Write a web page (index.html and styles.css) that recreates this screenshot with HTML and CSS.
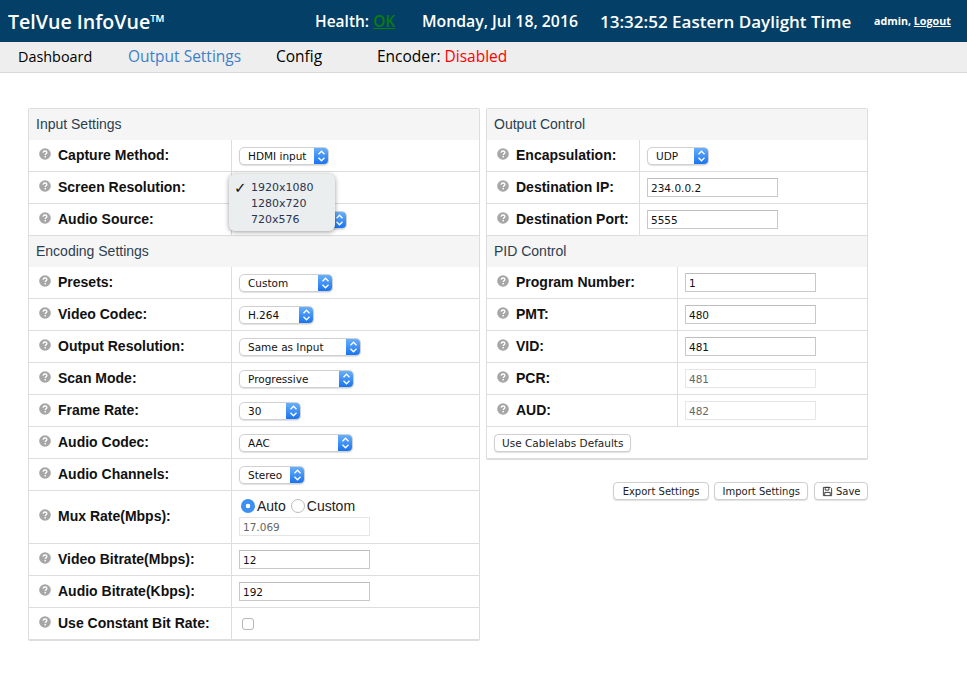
FILE: index.html
```html
<!DOCTYPE html>
<html lang="en">
<head>
<meta charset="utf-8">
<title>TelVue InfoVue</title>
<link rel="stylesheet" href="styles.css">
</head>
<body>
<svg class="defs" width="0" height="0" aria-hidden="true">
  <defs>
    <symbol id="help" viewBox="0 0 12 12">
      <circle cx="6" cy="6" r="5.8" fill="#a6a6a6"/>
      <path d="M4.100 4.700C4.200 3.500 5 3 6 3c1.100 0 1.900.6 1.900 1.500 0 1.300-1.600 1.300-1.600 2.500" fill="none" stroke="#fff" stroke-width="1.300"/>
      <rect x="5.500" y="7.900" width="1.500" height="1.500" fill="#fff"/>
    </symbol>
    <symbol id="updown" viewBox="0 0 15 18">
      <path d="M4.500 7.200 7.500 4.200l3 3M4.500 10.800l3 3 3-3" fill="none" stroke="#fff" stroke-width="1.400"/>
    </symbol>
  </defs>
</svg>

<header class="topbar">
  <div class="brand">TelVue InfoVue™</div>
  <div class="health">Health: <a href="#" class="ok">OK</a></div>
  <div class="date">Monday, Jul 18, 2016</div>
  <div class="time">13:32:52 Eastern Daylight Time</div>
  <div class="user">admin, <a href="#">Logout</a></div>
</header>

<nav class="navbar">
  <a href="#" class="nav-dash">Dashboard</a>
  <a href="#" class="nav-out">Output Settings</a>
  <a href="#" class="nav-config">Config</a>
  <span>Encoder: <span class="disabled">Disabled</span></span>
</nav>

<main class="content">
  <section class="panel panel-left">
    <h2 class="panel-title">Input Settings</h2>
    <div class="row">
      <div class="label"><svg class="help"><use href="#help"/></svg>Capture Method:</div>
      <div class="field"><div class="select w90"><span>HDMI input</span><i><svg><use href="#updown"/></svg></i></div></div>
    </div>
    <div class="row">
      <div class="label"><svg class="help"><use href="#help"/></svg>Screen Resolution:</div>
      <div class="field">
        <ul class="menu">
          <li class="checked">1920x1080</li>
          <li>1280x720</li>
          <li>720x576</li>
        </ul>
      </div>
    </div>
    <div class="row">
      <div class="label"><svg class="help"><use href="#help"/></svg>Audio Source:</div>
      <div class="field"><div class="select w108"><span></span><i><svg><use href="#updown"/></svg></i></div></div>
    </div>
    <h2 class="panel-title sub">Encoding Settings</h2>
    <div class="row">
      <div class="label"><svg class="help"><use href="#help"/></svg>Presets:</div>
      <div class="field"><div class="select w94"><span>Custom</span><i><svg><use href="#updown"/></svg></i></div></div>
    </div>
    <div class="row">
      <div class="label"><svg class="help"><use href="#help"/></svg>Video Codec:</div>
      <div class="field"><div class="select w75"><span>H.264</span><i><svg><use href="#updown"/></svg></i></div></div>
    </div>
    <div class="row">
      <div class="label"><svg class="help"><use href="#help"/></svg>Output Resolution:</div>
      <div class="field"><div class="select w122"><span>Same as Input</span><i><svg><use href="#updown"/></svg></i></div></div>
    </div>
    <div class="row">
      <div class="label"><svg class="help"><use href="#help"/></svg>Scan Mode:</div>
      <div class="field"><div class="select w115"><span>Progressive</span><i><svg><use href="#updown"/></svg></i></div></div>
    </div>
    <div class="row">
      <div class="label"><svg class="help"><use href="#help"/></svg>Frame Rate:</div>
      <div class="field"><div class="select w62"><span>30</span><i><svg><use href="#updown"/></svg></i></div></div>
    </div>
    <div class="row">
      <div class="label"><svg class="help"><use href="#help"/></svg>Audio Codec:</div>
      <div class="field"><div class="select w114"><span>AAC</span><i><svg><use href="#updown"/></svg></i></div></div>
    </div>
    <div class="row">
      <div class="label"><svg class="help"><use href="#help"/></svg>Audio Channels:</div>
      <div class="field"><div class="select w66"><span>Stereo</span><i><svg><use href="#updown"/></svg></i></div></div>
    </div>
    <div class="row tall">
      <div class="label"><svg class="help"><use href="#help"/></svg>Mux Rate(Mbps):</div>
      <div class="field stack">
        <div class="radios">
          <span class="radio on"></span><span class="radio-text">Auto</span>
          <span class="radio"></span><span class="radio-text">Custom</span>
        </div>
        <div class="input off">17.069</div>
      </div>
    </div>
    <div class="row">
      <div class="label"><svg class="help"><use href="#help"/></svg>Video Bitrate(Mbps):</div>
      <div class="field"><div class="input">12</div></div>
    </div>
    <div class="row">
      <div class="label"><svg class="help"><use href="#help"/></svg>Audio Bitrate(Kbps):</div>
      <div class="field"><div class="input">192</div></div>
    </div>
    <div class="row last">
      <div class="label"><svg class="help"><use href="#help"/></svg>Use Constant Bit Rate:</div>
      <div class="field"><span class="checkbox"></span></div>
    </div>
  </section>

  <div class="right-col">
    <section class="panel panel-right">
      <h2 class="panel-title">Output Control</h2>
      <div class="row narrow">
        <div class="label"><svg class="help"><use href="#help"/></svg>Encapsulation:</div>
        <div class="field"><div class="select w62"><span>UDP</span><i><svg><use href="#updown"/></svg></i></div></div>
      </div>
      <div class="row narrow">
        <div class="label"><svg class="help"><use href="#help"/></svg>Destination IP:</div>
        <div class="field"><div class="input">234.0.0.2</div></div>
      </div>
      <div class="row narrow">
        <div class="label"><svg class="help"><use href="#help"/></svg>Destination Port:</div>
        <div class="field"><div class="input">5555</div></div>
      </div>
      <h2 class="panel-title sub">PID Control</h2>
      <div class="row wide">
        <div class="label"><svg class="help"><use href="#help"/></svg>Program Number:</div>
        <div class="field"><div class="input">1</div></div>
      </div>
      <div class="row wide">
        <div class="label"><svg class="help"><use href="#help"/></svg>PMT:</div>
        <div class="field"><div class="input">480</div></div>
      </div>
      <div class="row wide">
        <div class="label"><svg class="help"><use href="#help"/></svg>VID:</div>
        <div class="field"><div class="input">481</div></div>
      </div>
      <div class="row wide">
        <div class="label"><svg class="help"><use href="#help"/></svg>PCR:</div>
        <div class="field"><div class="input off">481</div></div>
      </div>
      <div class="row wide">
        <div class="label"><svg class="help"><use href="#help"/></svg>AUD:</div>
        <div class="field"><div class="input off">482</div></div>
      </div>
      <div class="panel-foot"><button class="btn" type="button">Use Cablelabs Defaults</button></div>
    </section>
    <div class="actions">
      <button class="btn btn-export" type="button">Export Settings</button>
      <button class="btn btn-import" type="button">Import Settings</button>
      <button class="btn btn-save" type="button"><svg class="save" viewBox="0 0 12 12"><path d="M1.500 1.500h7.500l1.500 1.500v7.500h-9z" fill="none" stroke="#333" stroke-width="1"/><path d="M3.500 1.500h4v3h-4zM3 10.500v-3.500h6v3.500" fill="none" stroke="#333" stroke-width="1"/></svg>Save</button>
    </div>
  </div>
</main>
</body>
</html>
```
FILE: styles.css
```css
* { box-sizing: border-box; }
html, body { margin: 0; padding: 0; }
body {
  background: #fff;
  color: #000;
  font-family: "Liberation Sans", Arial, sans-serif;
  font-size: 14px;
  height: 690px;
  overflow: hidden;
}
.defs { position: absolute; }

.topbar {
  display: flex;
  align-items: center;
  height: 42px;
  background: #033f66;
  color: #fff;
  font-family: "Open Sans", sans-serif;
  font-weight: 600;
  font-size: 15.5px;
  white-space: nowrap;
}
.brand { width: 315px; padding-left: 8px; font-size: 19.6px; font-weight: 600; }
.health { width: 107px; }
.health .ok { color: #0a7d12; text-decoration: underline; }
.date { width: 178px; font-size: 15.8px; }
.time { width: 274px; font-size: 17px; }
.user { font-size: 10.7px; font-weight: 700; }
.user a { color: #fff; text-decoration: underline; }

.navbar {
  display: flex;
  align-items: center;
  height: 31px;
  padding: 0 0 2px 18px;
  background: #eee;
  border-bottom: 1px solid #d8d8d8;
  font-family: "Open Sans", sans-serif;
  font-size: 15.5px;
  white-space: nowrap;
}
.navbar a { color: #000; text-decoration: none; }
.navbar .nav-dash { width: 110px; font-size: 14.4px; }
.navbar .nav-out { width: 148px; color: #3f7fc9; }
.navbar .nav-config { width: 101px; }
.disabled { color: #f00; }

.content {
  display: flex;
  align-items: flex-start;
  gap: 6px;
  padding: 35px 0 0 28px;
}

.panel {
  background: #fff;
  border: 1px solid #ddd;
  border-bottom-width: 2px;
  border-radius: 2px;
}
.panel-left { width: 452px; }
.panel-right { width: 382px; }
.right-col { width: 382px; }

.panel-title {
  margin: 0;
  height: 31px;
  padding: 0 0 0 7px;
  background: #f5f5f5;
  color: #2c3e50;
  font-size: 14px;
  font-weight: 400;
  line-height: 31px;
}

.row {
  display: grid;
  grid-template-columns: 203px 1fr;
  height: 32px;
  border-bottom: 1px solid #ddd;
}
.row.tall { height: 53px; }
.row.last { height: 31px; border-bottom: 0; }
.row.narrow { grid-template-columns: 153px 1fr; }
.row.wide { grid-template-columns: 191px 1fr; }

.label {
  display: flex;
  align-items: center;
  padding: 0 0 1px 10px;
  font-weight: 700;
  font-size: 14px;
  color: #111;
  border-right: 1px solid #ddd;
  white-space: nowrap;
}
.row.tall .label { padding-bottom: 3px; }
.help { width: 12px; height: 12px; margin-right: 7px; flex: none; position: relative; top: -1px; }

.field {
  position: relative;
  display: flex;
  align-items: center;
  padding-left: 7px;
}
.field.stack { flex-direction: column; align-items: flex-start; justify-content: center; gap: 3px; }

.select {
  display: flex;
  height: 18px;
  background: #fff;
  border: 1px solid #d0d0d0;
  border-radius: 5px;
  overflow: hidden;
  font-family: "DejaVu Sans", sans-serif;
  font-size: 10.5px;
  color: #111;
  box-shadow: 0 1px 1px rgba(0,0,0,.12);
}
.select span { flex: 1; padding-left: 8px; line-height: 16px; white-space: nowrap; }
.select i {
  display: block;
  width: 15px;
  margin: -1px -1px -1px 0;
  background: linear-gradient(#6db3fb, #1470f0);
}
.select i svg { display: block; width: 15px; height: 18px; }
.w62 { width: 62px; }
.w66 { width: 66px; }
.w75 { width: 75px; }
.w90 { width: 90px; }
.w94 { width: 94px; }
.w108 { width: 108px; }
.w114 { width: 114px; }
.w115 { width: 115px; }
.w122 { width: 122px; }

.input {
  width: 131px;
  height: 19px;
  padding-left: 3px;
  border: 1px solid #c9c9c9;
  border-top-color: #bdbdbd;
  font-family: "DejaVu Sans", sans-serif;
  font-size: 10.5px;
  line-height: 18px;
  color: #111;
  background: #fff;
}
.input.off { border-color: #e6e6e6; color: #666; }

.radios { display: flex; align-items: center; height: 16px; font-size: 14px; color: #222; }
.radio {
  width: 14px;
  height: 14px;
  border-radius: 50%;
  background: #fff;
  border: 1px solid #bbb;
  margin: 0 2px 0 5px;
}
.radio.on {
  margin-left: 2px;
  border: 0;
  background: radial-gradient(circle, #fff 0 2px, #3d8ff2 2.6px);
}

.checkbox {
  display: block;
  width: 12px;
  height: 12px;
  margin-left: 3px;
  border: 1px solid #b5b5b5;
  border-radius: 3px;
  background: #fff;
}

.menu {
  position: absolute;
  z-index: 5;
  left: -3px;
  top: 2px;
  width: 106px;
  height: 57px;
  margin: 0;
  padding: 6px 0 0;
  list-style: none;
  background: #eaeeee;
  border-radius: 6px;
  box-shadow: 0 1px 5px rgba(0,0,0,.4);
  font-family: "DejaVu Sans", sans-serif;
  font-size: 11px;
  color: #2c3350;
}
.menu li { position: relative; height: 16px; line-height: 16px; padding-left: 22px; }
.menu li.checked::before {
  content: "✓";
  position: absolute;
  left: 5px;
  color: #111;
  font-weight: 700;
  font-size: 15px;
}

.panel-foot { height: 31px; padding: 7px 0 0 7px; }
.btn {
  height: 18px;
  padding: 0 7px;
  margin: 0;
  background: #fff;
  border: 1px solid #cfcfcf;
  border-radius: 4px;
  box-shadow: 0 1px 1px rgba(0,0,0,.12);
  font-family: "DejaVu Sans", sans-serif;
  font-size: 10.5px;
  color: #222;
  white-space: nowrap;
  display: inline-flex;
  align-items: center;
}
.save { width: 11px; height: 11px; margin-right: 3px; }
.actions {
  display: flex;
  justify-content: flex-end;
  gap: 5px;
  margin-top: 22px;
}
.actions .btn { font-size: 10px; padding: 0 7.5px; }
.actions .btn-export { padding: 0 8.5px; }
.actions .btn-import { margin-right: 1px; }
.actions .btn-save { padding: 0 6.5px; }
```
